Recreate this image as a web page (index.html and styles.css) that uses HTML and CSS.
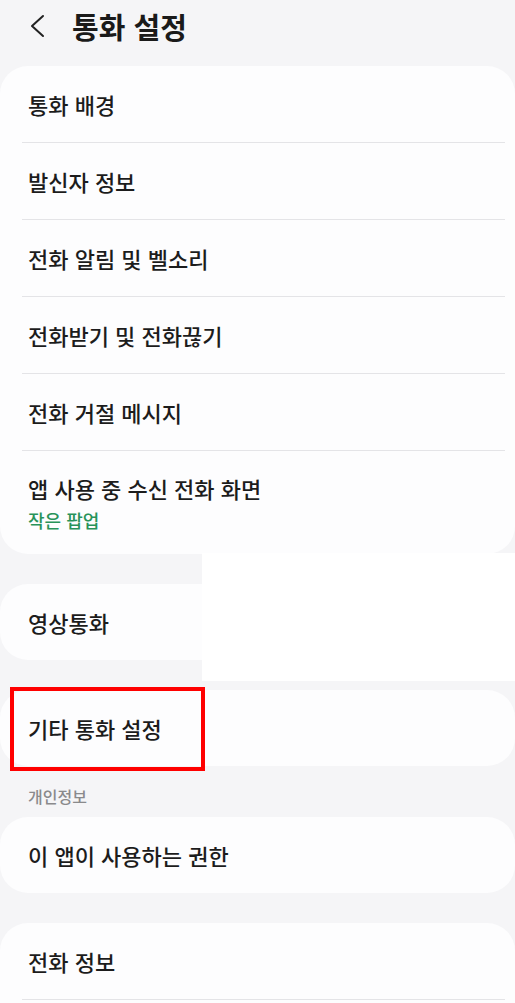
FILE: index.html
```html
<!DOCTYPE html>
<html lang="ko">
<head>
    <meta charset="UTF-8">
    <meta name="viewport" content="width=device-width, initial-scale=1.0">
    <title>통화 설정</title>
    <link rel="stylesheet" href="styles.css">
</head>
<body>
    <header class="topbar">
        <a href="#" class="back" aria-label="뒤로">
            <svg width="16" height="24" viewBox="0 0 16 24">
                <polyline points="14,2 3,12 14,22" fill="none" stroke="#222" stroke-width="2" stroke-linecap="round" stroke-linejoin="round"/>
            </svg>
        </a>
        <h1>통화 설정</h1>
    </header>

    <section class="card">
        <div class="row">통화 배경</div>
        <div class="divider"></div>
        <div class="row">발신자 정보</div>
        <div class="divider"></div>
        <div class="row">전화 알림 및 벨소리</div>
        <div class="divider"></div>
        <div class="row">전화받기 및 전화끊기</div>
        <div class="divider"></div>
        <div class="row">전화 거절 메시지</div>
        <div class="divider"></div>
        <div class="row two-line">
            <span class="title">앱 사용 중 수신 전화 화면</span>
            <span class="sub">작은 팝업</span>
        </div>
    </section>

    <section class="card">
        <div class="row">영상통화</div>
    </section>

    <section class="card marked">
        <div class="row">기타 통화 설정</div>
        <div class="highlight"></div>
    </section>

    <div class="group-label">개인정보</div>

    <section class="card">
        <div class="row">이 앱이 사용하는 권한</div>
    </section>

    <section class="card">
        <div class="row">전화 정보</div>
        <div class="divider"></div>
        <div class="spacer"></div>
    </section>

    <div class="patch"></div>
</body>
</html>
```

FILE: styles.css
```css
body {
    font-family: "Noto Sans CJK KR", "Noto Sans", sans-serif;
    margin: 0;
    padding: 0;
    background: #f5f5f7;
    color: #1c1c1c;
    position: relative;
    overflow: hidden;
    height: 1003px;
}
.topbar {
    height: 52px;
    display: flex;
    align-items: center;
    padding-left: 29px;
    margin-bottom: 14px;
}
.back {
    display: flex;
    width: 16px;
    height: 24px;
    margin-right: 27px;
}
.topbar h1 {
    margin: 0;
    font-size: 29px;
    font-weight: bold;
    color: #1a1a1a;
}
.card {
    background: #fdfdfe;
    border-radius: 28px;
    margin-bottom: 30px;
    position: relative;
}
.row {
    height: 76px;
    display: flex;
    align-items: center;
    padding: 0 28px;
    font-size: 22px;
    font-weight: 500;
}
.divider {
    height: 1px;
    background: #e4e4e7;
    margin: 0 10px 0 22px;
}
.spacer {
    height: 40px;
}
.two-line {
    height: 103px;
    flex-direction: column;
    align-items: flex-start;
    justify-content: center;
}
.two-line .title {
    line-height: 30px;
}
.two-line .sub {
    line-height: 24px;
    margin-top: 5px;
    font-size: 18px;
    color: #28935a;
}
.highlight {
    position: absolute;
    left: 10px;
    top: -3px;
    width: 195px;
    height: 84px;
    border: 4px solid #ff0000;
    box-sizing: border-box;
}
.marked {
    margin-bottom: 0;
}
.group-label {
    padding: 20px 28px 0;
    line-height: 20px;
    height: 20px;
    margin-bottom: 11px;
    font-size: 16px;
    font-weight: 500;
    color: #8a8a8c;
}
.patch {
    position: absolute;
    left: 202px;
    top: 553px;
    width: 313px;
    height: 128px;
    background: #ffffff;
}
```
